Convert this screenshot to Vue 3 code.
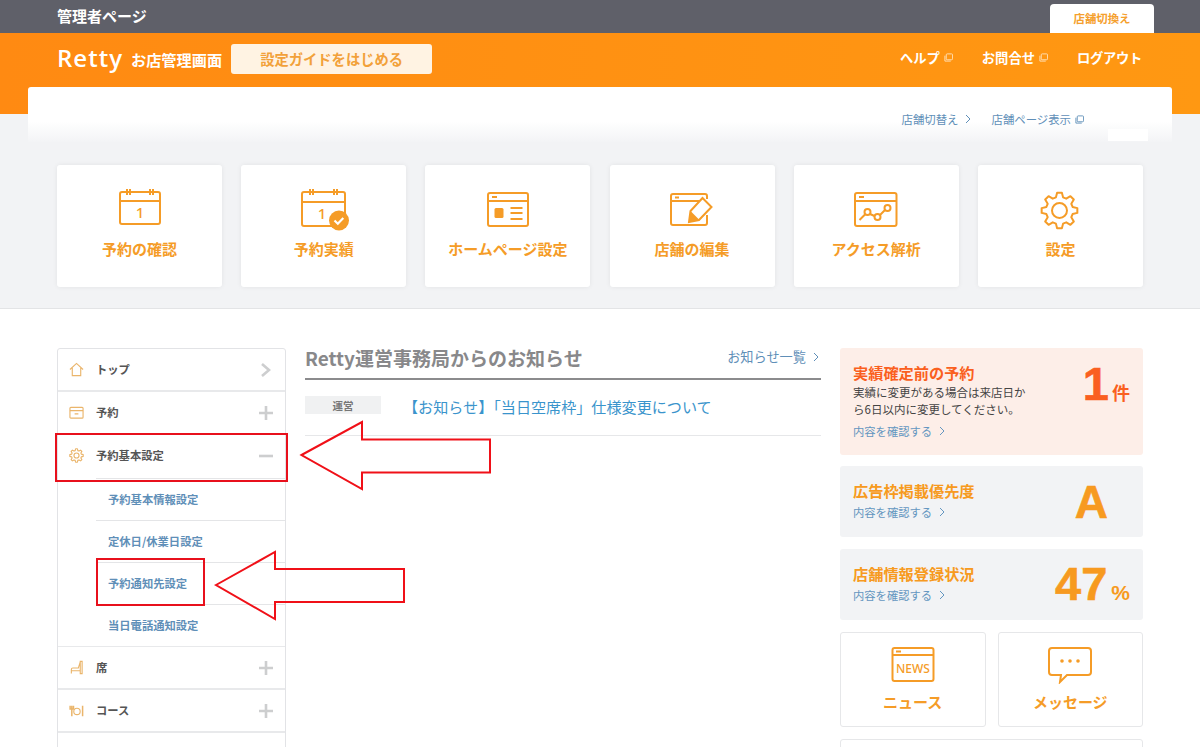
<script setup>
const subItems = ['予約基本情報設定', '定休日/休業日設定', '予約通知先設定', '当日電話通知設定']

function gearPath(cx, cy, outer, inner, teeth) {
  const pts = []
  const step = (Math.PI * 2) / teeth
  for (let i = 0; i < teeth; i++) {
    const a = i * step - Math.PI / 2
    const spots = [
      [inner, a - step * 0.34],
      [outer, a - step * 0.17],
      [outer, a + step * 0.17],
      [inner, a + step * 0.34],
    ]
    for (const [r, t] of spots) {
      pts.push(`${(cx + r * Math.cos(t)).toFixed(2)} ${(cy + r * Math.sin(t)).toFixed(2)}`)
    }
  }
  return `M${pts.join('L')}z`
}
const gear = gearPath(22.5, 23.5, 18, 13.6, 8)
const smallGear = gearPath(8, 8, 7.2, 5.4, 8)
</script>

<template>
  <div class="page">
    <div class="topbar">
      <span class="admin">管理者ページ</span>
      <span class="switch-tab">店舗切換え</span>
    </div>

    <header class="orange">
      <div class="brand">
        <span class="logo">Retty</span>
        <span class="brand-sub">お店管理画面</span>
        <span class="guide">設定ガイドをはじめる</span>
      </div>
      <nav class="head-nav">
        <span class="head-link">ヘルプ<svg class="ext" viewBox="0 0 10 10"><rect x="2.500" y="1" width="7" height="6.500" rx="1"/><path d="M1 3v6h6.500"/></svg></span>
        <span class="head-link">お問合せ<svg class="ext" viewBox="0 0 10 10"><rect x="2.500" y="1" width="7" height="6.500" rx="1"/><path d="M1 3v6h6.500"/></svg></span>
        <span class="head-link logout">ログアウト</span>
      </nav>
    </header>

    <section class="band">
      <div class="shop-panel">
        <span class="shop-link">店舗切替え<svg class="chev" viewBox="0 0 6 10"><path d="M1 1l4 4-4 4"/></svg></span>
        <span class="shop-link">店舗ページ表示<svg class="ext blue" viewBox="0 0 10 10"><rect x="2.500" y="1" width="7" height="6.500" rx="1"/><path d="M1 3v6h6.500"/></svg></span>
        <span class="panel-patch"></span>
      </div>

      <div class="tiles">
        <div class="tile">
          <svg class="tile-icon" viewBox="0 0 46 40">
            <rect x="3" y="5" width="40" height="32" rx="2"/>
            <path d="M3 14h40M10 2v6M13 2v6M33 2v6M36 2v6"/>
            <text x="23" y="31" class="cal-num">1</text>
          </svg>
          <span>予約の確認</span>
        </div>
        <div class="tile">
          <svg class="tile-icon" viewBox="0 0 46 40">
            <rect x="1" y="5" width="43" height="34" rx="2"/>
            <path d="M1 15h43M9 2v6M12 2v6M33 2v6M36 2v6"/>
            <text x="21" y="32" class="cal-num">1</text>
            <circle cx="38" cy="33.500" r="10" class="solid"/>
            <path d="M33.500 33.500l3.300 3.200 5.500-5.700" class="check"/>
          </svg>
          <span>予約実績</span>
        </div>
        <div class="tile">
          <svg class="tile-icon" viewBox="0 0 46 40">
            <rect x="3" y="6" width="40" height="33" rx="2"/>
            <path d="M3 14h40M7 10h5M25.500 21h12M25.500 26h12M25.500 32h12"/>
            <rect x="9.500" y="21" width="9" height="10" rx="1.500" class="solid"/>
          </svg>
          <span>ホームページ設定</span>
        </div>
        <div class="tile">
          <svg class="tile-icon" viewBox="0 0 46 40">
            <path d="M38 28v8a2 2 0 0 1-2 2H4a2 2 0 0 1-2-2V9a2 2 0 0 1 2-2h32a2 2 0 0 1 2 2v3"/>
            <path d="M2 14h29M6 10.500h4"/>
            <path d="M33.500 11l9 9-12.500 13-10 2 1.500-11z" class="pen"/>
            <path d="M20 35l1.500-11 9 9z" class="solid"/>
          </svg>
          <span>店舗の編集</span>
        </div>
        <div class="tile">
          <svg class="tile-icon" viewBox="0 0 46 40">
            <rect x="2" y="6" width="41.500" height="33" rx="2"/>
            <path d="M2 14h41.500M6 10h5M6.500 33l6-6M17 27l4.500 2M27 28l5-5"/>
            <circle cx="14.500" cy="25" r="3"/><circle cx="24.500" cy="30" r="3"/><circle cx="34.500" cy="21" r="3"/>
          </svg>
          <span>アクセス解析</span>
        </div>
        <div class="tile">
          <svg class="tile-icon" viewBox="0 0 46 40">
            <path :d="gear" stroke-linejoin="round"/>
            <circle cx="22.500" cy="23.500" r="7.500"/>
          </svg>
          <span>設定</span>
        </div>
      </div>
    </section>

    <main class="content">
      <aside class="side">
        <div class="row">
          <svg class="row-icon" viewBox="0 0 16 16"><path d="M1 8l7-6.500L15 8M3.500 6.500v8h9v-8"/></svg>
          <span class="row-text">トップ</span>
          <svg class="sign" viewBox="0 0 14 14"><path d="M3 1l7 6-7 6"/></svg>
        </div>
        <div class="row">
          <svg class="row-icon" viewBox="0 0 16 16"><rect x="1" y="2.500" width="14" height="11.500" rx="1"/><path d="M1 6h14M6 9.500h4"/></svg>
          <span class="row-text">予約</span>
          <svg class="sign" viewBox="0 0 14 14"><path d="M0 7h14M7 0v14"/></svg>
        </div>
        <div class="row open">
          <svg class="row-icon" viewBox="0 0 16 16"><path :d="smallGear" stroke-linejoin="round"/><circle cx="8" cy="8" r="2.700"/></svg>
          <span class="row-text">予約基本設定</span>
          <svg class="sign" viewBox="0 0 14 14"><path d="M0 7h14"/></svg>
        </div>
        <div class="subs">
          <div v-for="item in subItems" :key="item" class="sub">{{ item }}</div>
        </div>
        <div class="row">
          <svg class="row-icon" viewBox="0 0 16 16"><path d="M12 1.500h2v13h-2zM12 2L10 8.500H4a1.500 1.500 0 0 0-1.500 1.500v4.500M2.500 11.500H12"/></svg>
          <span class="row-text">席</span>
          <svg class="sign" viewBox="0 0 14 14"><path d="M0 7h14M7 0v14"/></svg>
        </div>
        <div class="row">
          <svg class="row-icon" viewBox="0 0 16 16"><circle cx="8.500" cy="9" r="3.400"/><path d="M3 3v11M1.200 3v3.500h3.600V3M14.500 3v11" stroke-width="1.600"/></svg>
          <span class="row-text">コース</span>
          <svg class="sign" viewBox="0 0 14 14"><path d="M0 7h14M7 0v14"/></svg>
        </div>
        <div class="row"></div>
      </aside>

      <section class="news">
        <div class="news-head">
          <h2>Retty運営事務局からのお知らせ</h2>
          <span class="news-all">お知らせ一覧<svg class="chev" viewBox="0 0 6 10"><path d="M1 1l4 4-4 4"/></svg></span>
        </div>
        <div class="news-row">
          <span class="tag">運営</span>
          <span class="news-title">【お知らせ】「当日空席枠」仕様変更について</span>
        </div>
      </section>

      <aside class="right">
        <div class="stat pink">
          <div class="stat-body">
            <div class="stat-title red">実績確定前の予約</div>
            <p class="stat-note">実績に変更がある場合は来店日から6日以内に変更してください。</p>
            <span class="stat-link">内容を確認する<svg class="chev" viewBox="0 0 6 10"><path d="M1 1l4 4-4 4"/></svg></span>
          </div>
          <div class="stat-value red val-count"><b>1</b><i>件</i></div>
        </div>
        <div class="stat">
          <div class="stat-body">
            <div class="stat-title">広告枠掲載優先度</div>
            <span class="stat-link">内容を確認する<svg class="chev" viewBox="0 0 6 10"><path d="M1 1l4 4-4 4"/></svg></span>
          </div>
          <div class="stat-value val-a"><b>A</b></div>
        </div>
        <div class="stat">
          <div class="stat-body">
            <div class="stat-title">店舗情報登録状況</div>
            <span class="stat-link">内容を確認する<svg class="chev" viewBox="0 0 6 10"><path d="M1 1l4 4-4 4"/></svg></span>
          </div>
          <div class="stat-value val-pct"><b>47</b><i>%</i></div>
        </div>
        <div class="mini-row">
          <div class="mini">
            <svg class="mini-icon" viewBox="0 0 46 38">
              <rect x="2.500" y="2" width="41" height="33" rx="2"/>
              <path d="M2.500 9h41M6 5.500h5"/>
              <text x="23" y="27" class="news-word">NEWS</text>
            </svg>
            <span>ニュース</span>
          </div>
          <div class="mini">
            <svg class="mini-icon" viewBox="0 0 46 38">
              <path d="M5 2h36a3 3 0 0 1 3 3v21a3 3 0 0 1-3 3H20l-7 7 1-7H5a3 3 0 0 1-3-3V5a3 3 0 0 1 3-3z"/>
              <circle cx="15" cy="15" r="1.800" class="solid"/><circle cx="23" cy="15" r="1.800" class="solid"/><circle cx="31" cy="15" r="1.800" class="solid"/>
            </svg>
            <span>メッセージ</span>
          </div>
        </div>
        <div class="more-card"></div>
      </aside>
    </main>

    <div class="mark mark-a"></div>
    <div class="mark mark-b"></div>
    <svg class="arrows" viewBox="0 0 1200 747">
      <path d="M301.500 455L362 422v17.500h128v33H362V489z"/>
      <path d="M216 585l59-33v17h129v33H275v17z"/>
    </svg>
  </div>
</template>

<style scoped>
.page {
  position: relative;
  width: 1200px;
  height: 747px;
  overflow: hidden;
  background: #fff;
  font-family: "Noto Sans CJK JP", "Noto Sans", sans-serif;
}
.topbar {
  height: 33px;
  background: #5f6069;
  display: flex;
  align-items: flex-end;
  justify-content: space-between;
  padding: 0 46px 0 57px;
  box-sizing: border-box;
}
.admin {
  color: #fff;
  font-size: 15px;
  font-weight: 700;
  line-height: 32px;
  align-self: flex-start;
}
.switch-tab {
  width: 104px;
  height: 29px;
  background: #fff;
  border-radius: 4px 4px 0 0;
  color: #f5a02e;
  font-size: 11.400px;
  font-weight: 700;
  text-align: center;
  line-height: 28px;
}
.orange {
  height: 81px;
  box-sizing: border-box;
  padding: 10px 58px 0 57px;
  background: linear-gradient(90deg, #ff8a12, #ff9812);
  display: flex;
  justify-content: space-between;
  align-items: flex-start;
}
.brand { display: flex; align-items: center; height: 31px; }
.logo {
  color: #fff;
  font-family: "Open Sans", sans-serif;
  font-size: 24px;
  font-weight: 600;
  letter-spacing: 1px;
  line-height: 31px;
  margin-top: -3px;
}
.brand-sub {
  color: #fff;
  font-size: 15.200px;
  font-weight: 700;
  margin-left: 8px;
}
.guide {
  width: 201px;
  height: 30px;
  margin-left: 9px;
  border-radius: 3px;
  background: #fff3e3;
  color: #f2a13a;
  font-size: 14.300px;
  font-weight: 700;
  text-align: center;
  line-height: 30px;
}
.head-nav { display: flex; gap: 29px; height: 28px; align-items: center; }
.head-link {
  color: #fff;
  font-size: 13.300px;
  font-weight: 700;
  display: flex;
  align-items: center;
  gap: 4px;
}
.logout { letter-spacing: -0.300px; }
.ext { width: 9px; height: 9px; fill: none; stroke: #ffe3bd; stroke-width: 1; }
.ext.blue { stroke: #5f8fb8; margin-left: 4px; }
.chev { width: 6px; height: 10px; fill: none; stroke: currentColor; stroke-width: 1; margin-left: 7px; }
.band {
  display: flow-root;
  height: 195px;
  box-sizing: border-box;
  background: #f2f3f5;
  border-bottom: 1px solid #e3e4e6;
}
.shop-panel {
  position: relative;
  height: 55px;
  margin: -27px 28px 0;
  padding: 0 88px 0 0;
  box-sizing: border-box;
  background: linear-gradient(#fff 0, #fff 62%, #f3f4f6 100%);
  border-radius: 3px 3px 0 0;
  display: flex;
  justify-content: flex-end;
  align-items: center;
  gap: 20px;
}
.shop-link {
  color: #5f8fb8;
  font-size: 11.400px;
  display: flex;
  align-items: center;
  margin-top: 9px;
}
.panel-patch {
  position: absolute;
  right: 24px;
  bottom: 1px;
  width: 40px;
  height: 12px;
  background: #fff;
}
.tiles {
  display: grid;
  grid-template-columns: repeat(6, 165px);
  column-gap: 19.200px;
  padding: 23px 0 0 57px;
}
.tile {
  height: 122px;
  box-sizing: border-box;
  padding-top: 22px;
  background: #fff;
  border-radius: 3px;
  box-shadow: 0 0 5px rgba(0, 0, 0, 0.07);
  display: flex;
  flex-direction: column;
  align-items: center;
  gap: 11px;
  color: #f59c27;
  font-size: 15px;
  font-weight: 700;
  line-height: 22px;
}
.tile-icon { width: 46px; height: 40px; fill: none; stroke: #f59c27; stroke-width: 2; overflow: visible; }
.solid { fill: #f59c27; stroke: none; }
.pen { fill: #fff; }
.check { fill: none; stroke: #fff; stroke-width: 2.200; }
.cal-num {
  fill: #f59c27;
  stroke: none;
  font-family: "Noto Sans", sans-serif;
  font-size: 15px;
  font-weight: 500;
  text-anchor: middle;
}
.content {
  display: flex;
  align-items: flex-start;
  padding: 39px 58px 0 57px;
}
.side {
  width: 229px;
  flex: none;
  box-sizing: border-box;
  border: 1px solid #e2e3e6;
  border-radius: 3px;
}
.row {
  height: 43px;
  box-sizing: border-box;
  border-bottom: 2px solid #e8e9eb;
  display: flex;
  align-items: center;
  padding: 0 12px 0 11px;
}
.row.open { border-bottom: none; padding-bottom: 2px; }
.row-icon { width: 15px; height: 15px; fill: none; stroke: #eab56b; stroke-width: 1.200; flex: none; }
.row-text {
  margin: -1px 0 0 12px;
  flex: 1;
  color: #555;
  font-size: 11.300px;
  font-weight: 700;
}
.sign { width: 14px; height: 14px; fill: none; stroke: #cdcecf; stroke-width: 2.600; }
.subs { border-bottom: 1px solid #e8e9eb; }
.sub {
  height: 42px;
  line-height: 40px;
  box-sizing: border-box;
  margin-left: 38px;
  padding-left: 12px;
  color: #5f8fb8;
  font-size: 11.300px;
  font-weight: 700;
  border-top: 1px solid #e4e5e7;
}
.news { width: 516px; margin-left: 19px; flex: none; }
.news-head {
  height: 32px;
  box-sizing: border-box;
  border-bottom: 2px solid #8b8b8d;
  display: flex;
  justify-content: space-between;
  align-items: flex-start;
}
h2 {
  margin: 0;
  color: #88888a;
  font-size: 19px;
  font-weight: 700;
  line-height: 19px;
}
.news-all {
  display: flex;
  align-items: center;
  padding-right: 2px;
  color: #5f8fb8;
  font-size: 13.200px;
  line-height: 18px;
}
.news-row {
  height: 56px;
  box-sizing: border-box;
  border-bottom: 1px solid #e6e7e9;
  display: flex;
  align-items: flex-start;
  padding-top: 16px;
}
.tag {
  width: 76px;
  height: 18px;
  background: #f0f1f2;
  color: #777;
  font-size: 10.500px;
  font-weight: 700;
  text-align: center;
  line-height: 19px;
}
.news-title {
  margin: -2px 0 0 22px;
  color: #3a94cc;
  font-size: 15.100px;
  line-height: 24px;
}
.right { width: 303px; margin-left: 19px; flex: none; }
.stat {
  height: 71px;
  margin-bottom: 12px;
  box-sizing: border-box;
  padding: 10px 13px 7px;
  background: #f2f3f5;
  border-radius: 3px;
  display: flex;
  justify-content: space-between;
  position: relative;
}
.stat.pink { height: 107px; background: #fdeee8; padding-top: 12px; margin-bottom: 11px; }
.stat-body { width: 178px; }
.stat-title { color: #f79a20; font-size: 15.200px; font-weight: 700; line-height: 25px; margin-top: 2px; }
.stat-title.red { color: #fa5f20; line-height: 23px; margin-top: 1px; }
.stat-note { margin: 0 0 4px; color: #444; font-size: 11.500px; line-height: 17px; }
.stat-link { display: flex; align-items: center; color: #6496c0; font-size: 11.300px; line-height: 18px; }
.stat-value { color: #f79a20; display: flex; align-items: baseline; }
.stat-value.red { color: #fa5f20; }
.stat-value b {
  font-family: "Liberation Sans", sans-serif;
  font-size: 46px;
  font-weight: 700;
  line-height: 54px;
  -webkit-text-stroke: 0.600px currentColor;
}
.stat-value i { font-style: normal; font-weight: 700; font-size: 18px; margin-left: 6px; }
.val-count { margin-top: -3px; }
.val-count b { font-size: 47px; }
.val-count i { margin-left: 3px; }
.val-a { padding-right: 22px; margin-top: -1px; }
.val-pct { margin-top: -2px; }
.val-pct b { font-size: 47px; }
.val-pct i { font-family: "Liberation Sans", sans-serif; font-size: 21px; margin-left: 4px; }
.mini-row { display: flex; gap: 12px; }
.mini {
  width: 145.500px;
  height: 95px;
  box-sizing: border-box;
  border: 1px solid #e6e7e9;
  border-radius: 3px;
  padding-top: 13px;
  display: flex;
  flex-direction: column;
  align-items: center;
  gap: 8px;
  color: #f59c27;
  font-size: 15px;
  font-weight: 700;
  line-height: 20px;
}
.mini-icon { width: 46px; height: 38px; fill: none; stroke: #f59c27; stroke-width: 2; }
.news-word {
  fill: #f59c27;
  stroke: none;
  font-family: "Noto Sans", sans-serif;
  font-size: 12px;
  font-weight: 500;
  text-anchor: middle;
}
.more-card {
  height: 40px;
  margin-top: 12px;
  border: 1px solid #e6e7e9;
  border-radius: 3px;
}
.mark {
  position: absolute;
  box-sizing: border-box;
  border: 2px solid #e8101c;
}
.mark-a { left: 55px; top: 433px; width: 233px; height: 49px; }
.mark-b { left: 96px; top: 558px; width: 109px; height: 48px; }
.arrows {
  position: absolute;
  left: 0;
  top: 0;
  width: 1200px;
  height: 747px;
  fill: none;
  stroke: #f01018;
  stroke-width: 2;
  pointer-events: none;
}
</style>
